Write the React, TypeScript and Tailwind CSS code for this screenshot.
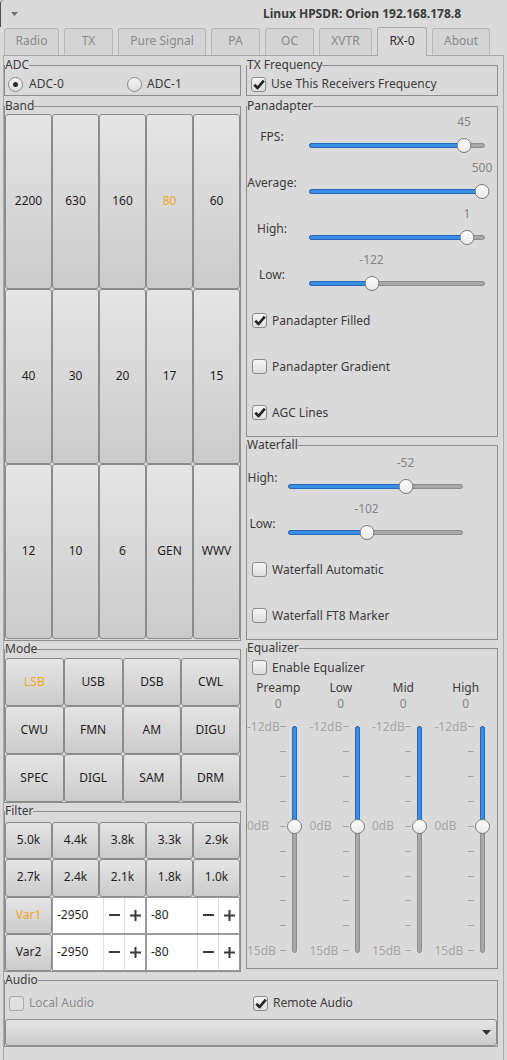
import React from 'react'

const TABS = [
  { label: 'Radio', w: 'w-[55px]' },
  { label: 'TX', w: 'w-[49px]' },
  { label: 'Pure Signal', w: 'w-[88px]' },
  { label: 'PA', w: 'w-[49px]' },
  { label: 'OC', w: 'w-[49px]' },
  { label: 'XVTR', w: 'w-[53px]' },
  { label: 'RX-0', w: 'w-[50px]', active: true },
  { label: 'About', w: 'w-[58px]' },
]

const BANDS = ['2200', '630', '160', '80', '60', '40', '30', '20', '17', '15', '12', '10', '6', 'GEN', 'WWV']
const MODES = ['LSB', 'USB', 'DSB', 'CWL', 'CWU', 'FMN', 'AM', 'DIGU', 'SPEC', 'DIGL', 'SAM', 'DRM']
const FILTERS = ['5.0k', '4.4k', '3.8k', '3.3k', '2.9k', '2.7k', '2.4k', '2.1k', '1.8k', '1.0k']

// knob = px from the left of the scale widget
const PAN_SCALES = [
  { label: 'FPS:', value: '45', knob: 167 },
  { label: 'Average:', value: '500', knob: 185 },
  { label: 'High:', value: '1', knob: 170 },
  { label: 'Low:', value: '-122', knob: 74.5 },
]
const WF_SCALES = [
  { label: 'High:', value: '-52', knob: 127.5 },
  { label: 'Low:', value: '-102', knob: 88.5 },
]
const EQ_BANDS = ['Preamp', 'Low', 'Mid', 'High']

const BTN =
  'flex items-center justify-center pb-px rounded-[3px] border border-[#8b8b8b] bg-linear-to-b from-[#e5e5e5] to-[#cbcbcb] text-[#1f1f1f]'

function Frame({ label, className = '', children }: { label: string; className?: string; children: React.ReactNode }) {
  return (
    <fieldset className={`min-w-0 border border-[#8e8e8e] ${className}`}>
      <legend className="p-0 leading-[16px] text-[#3a3a3a]">{label}</legend>
      {children}
    </fieldset>
  )
}

function Check({ checked = false, disabled = false }: { checked?: boolean; disabled?: boolean }) {
  return (
    <span
      className={`flex h-[15px] w-[15px] shrink-0 items-center justify-center rounded-[3px] border ${
        disabled ? 'border-[#a9a9a9] bg-[#e0e0e0]' : 'border-[#8a8a8a] bg-linear-to-b from-[#f7f7f7] to-[#dcdcdc]'
      }`}
    >
      {checked && (
        <svg width="12" height="11" viewBox="0 0 12 11">
          <path d="M1.3 5.8 L4.6 9 L10.8 1.6" stroke="#262626" strokeWidth="2.7" fill="none" strokeLinejoin="round" />
        </svg>
      )}
    </span>
  )
}

function Radio({ checked = false }: { checked?: boolean }) {
  return (
    <span className="flex h-[15px] w-[15px] shrink-0 items-center justify-center rounded-full border border-[#8a8a8a] bg-linear-to-b from-[#f7f7f7] to-[#dcdcdc]">
      {checked && <span className="h-[5px] w-[5px] rounded-full bg-[#2b2b2b]" />}
    </span>
  )
}

function CheckRow({ label, checked, className = '' }: { label: string; checked?: boolean; className?: string }) {
  return (
    <div className={`flex items-center gap-[5px] pl-[5px] pb-px ${className}`}>
      <Check checked={checked} />
      <span className="text-[#3a3a3a]">{label}</span>
    </div>
  )
}

function HScale({ value, knob, trackLeft, trackWidth, className }: { value: string; knob: number; trackLeft: number; trackWidth: number; className: string }) {
  return (
    <div className={`relative h-[46px] ${className}`}>
      <span className="absolute top-0 -translate-x-1/2 text-[#858585]" style={{ left: knob }}>
        {value}
      </span>
      <div
        className="absolute top-[29px] h-[5px] rounded-full border border-[#8c8c8c] bg-[#a7a7a7]"
        style={{ left: trackLeft, width: trackWidth }}
      />
      <div
        className="absolute top-[29px] h-[5px] rounded-full border border-[#2567b8] bg-[#3a8de4]"
        style={{ left: trackLeft, width: knob - trackLeft }}
      />
      <div
        className="absolute top-[24px] h-[15px] w-[15px] -translate-x-1/2 rounded-full border border-[#7b7b7b] bg-linear-to-b from-white to-[#e9e9e9]"
        style={{ left: knob }}
      />
    </div>
  )
}

function VScale() {
  const marks = Array.from({ length: 10 }, (_, i) => 14 + i * 24.92)
  const labels: Record<number, string> = { 0: '-12dB', 4: '0dB', 9: '15dB' }
  return (
    <div className="relative h-[256px]">
      {marks.map((y, i) => (
        <React.Fragment key={i}>
          {labels[i] && (
            <span className="absolute left-0 -translate-y-1/2 leading-[14px] text-[#a6a6a6]" style={{ top: y + 0.5 }}>
              {labels[i]}
            </span>
          )}
          <span className="absolute left-[33px] h-px w-[6px] bg-[#a6a6a6]" style={{ top: y }} />
        </React.Fragment>
      ))}
      <div className="absolute left-[45px] top-[14px] h-[227px] w-[5px] rounded-full border border-[#8c8c8c] bg-[#a7a7a7]" />
      <div className="absolute left-[45px] top-[14px] h-[102px] w-[5px] rounded-full border border-[#2567b8] bg-[#3a8de4]" />
      <div className="absolute left-[40px] top-[107px] h-[15px] w-[15px] rounded-full border border-[#7b7b7b] bg-linear-to-b from-white to-[#e9e9e9]" />
    </div>
  )
}

function Spin({ value }: { value: string }) {
  return (
    <div className="col-span-2 flex border border-[#9a9a9a] bg-white">
      <span className="flex flex-1 items-center pb-px pl-[4px] text-[#1f1f1f]">{value}</span>
      <span className="flex w-[21px] items-center justify-center border-l border-[#dedede]">
        <svg width="11" height="2" viewBox="0 0 11 2">
          <rect width="11" height="2" fill="#3a3a3a" />
        </svg>
      </span>
      <span className="flex w-[21px] items-center justify-center border-l border-[#dedede]">
        <svg width="11" height="11" viewBox="0 0 11 11">
          <rect y="4.5" width="11" height="2" fill="#3a3a3a" />
          <rect x="4.5" width="2" height="11" fill="#3a3a3a" />
        </svg>
      </span>
    </div>
  )
}

export default function App() {
  return (
    <div className="h-[1060px] w-[507px] overflow-hidden bg-[#dadada] font-['Noto_Sans',sans-serif] text-[12px] leading-[16px] text-[#3a3a3a]">
      {/* Title bar */}
      <div className="flex h-[27px] items-center rounded-tl-[4px] border-l border-[#4e4e4e]">
        <svg className="ml-[10px]" width="7" height="4" viewBox="0 0 7 4">
          <path d="M0 0h7L3.5 4z" fill="#6e6e6e" />
        </svg>
        <span className="flex-1 pr-[46px] text-right font-bold text-[#3a3a3a]">Linux HPSDR: Orion 192.168.178.8</span>
      </div>

      {/* Tabs */}
      <div className="flex h-[28px] items-end gap-[5px] pl-[4px]">
        {TABS.map((t) =>
          t.active ? (
            <div
              key={t.label}
              className={`relative z-10 -mb-px flex h-[29px] items-center justify-center rounded-t-[3px] border border-b-0 border-[#a9a9a9] bg-[#dadada] pb-[3px] text-[#2f2f2f] ${t.w}`}
            >
              {t.label}
            </div>
          ) : (
            <div
              key={t.label}
              className={`flex h-[27px] items-center justify-center rounded-t-[3px] border border-b-0 border-[#b7b7b7] bg-[#d4d4d4] pb-[2px] text-[#8a8a8a] ${t.w}`}
            >
              {t.label}
            </div>
          )
        )}
      </div>

      {/* Notebook page */}
      <div className="ml-[3px] h-[1006px] w-[501px] border-x border-t border-[#a9a9a9]">
        <div className="flex gap-[5px]">
          {/* Left column */}
          <div className="flex w-[237px] flex-col">
            <Frame label="ADC" className="mt-px">
              <div className="flex h-[22px] items-center">
                <div className="flex w-[119px] items-center gap-[6px] pl-[3px]">
                  <Radio checked />
                  <span>ADC-0</span>
                </div>
                <div className="flex items-center gap-[5px] pl-[3px]">
                  <Radio />
                  <span>ADC-1</span>
                </div>
              </div>
            </Frame>

            <Frame label="Band" className="mt-[2px] pb-px">
              <div className="grid h-[525px] grid-cols-5 grid-rows-3">
                {BANDS.map((b) => (
                  <div key={b} className={`${BTN} ${b === '80' ? 'text-[#f5a623]' : ''}`}>
                    {b}
                  </div>
                ))}
              </div>
            </Frame>

            <Frame label="Mode" className="pt-px">
              <div className="grid h-[144px] grid-cols-4 grid-rows-3">
                {MODES.map((m) => (
                  <div key={m} className={`${BTN} ${m === 'LSB' ? 'text-[#f5a623]' : ''}`}>
                    {m}
                  </div>
                ))}
              </div>
            </Frame>

            <Frame label="Filter" className="pt-[3px]">
              <div className="grid h-[149px] grid-cols-5 grid-rows-4">
                {FILTERS.map((f) => (
                  <div key={f} className={BTN}>
                    {f}
                  </div>
                ))}
                <div className={`${BTN} text-[#f5a623]`}>Var1</div>
                <Spin value="-2950" />
                <Spin value="-80" />
                <div className={BTN}>Var2</div>
                <Spin value="-2950" />
                <Spin value="-80" />
              </div>
            </Frame>
          </div>

          {/* Right column */}
          <div className="flex w-[252px] flex-col">
            <Frame label="TX Frequency" className="mt-px">
              <div className="flex h-[22px] items-center gap-[5px] pl-[4px]">
                <Check checked />
                <span>Use This Receivers Frequency</span>
              </div>
            </Frame>

            <Frame label="Panadapter" className="mt-[2px]">
              {PAN_SCALES.map((s) => (
                <div key={s.label} className="flex">
                  <span className="flex h-[46px] w-[50px] items-center justify-center">{s.label}</span>
                  <HScale value={s.value} knob={s.knob} trackLeft={12} trackWidth={176} className="w-[198px]" />
                </div>
              ))}
              <CheckRow label="Panadapter Filled" checked className="h-[46px]" />
              <CheckRow label="Panadapter Gradient" className="h-[46px]" />
              <CheckRow label="AGC Lines" checked className="h-[46px]" />
            </Frame>

            <Frame label="Waterfall" className="pt-[2px]">
              {WF_SCALES.map((s) => (
                <div key={s.label} className="flex">
                  <span className="flex h-[46px] w-[31px] items-center justify-center">{s.label}</span>
                  <HScale value={s.value} knob={s.knob} trackLeft={10} trackWidth={175} className="w-[198px]" />
                </div>
              ))}
              <CheckRow label="Waterfall Automatic" className="h-[46px]" />
              <CheckRow label="Waterfall FT8 Marker" className="h-[46px]" />
            </Frame>

            <Frame label="Equalizer">
              <CheckRow label="Enable Equalizer" className="h-[24px]" />
              <div className="grid grid-cols-4">
                {EQ_BANDS.map((b) => (
                  <div key={b} className="flex flex-col">
                    <span className="h-[16px] text-center text-[#3a3a3a]">{b}</span>
                    <span className="h-[16px] text-center text-[#858585]">0</span>
                    <VScale />
                  </div>
                ))}
              </div>
            </Frame>
          </div>
        </div>

        {/* Audio */}
        <Frame label="Audio" className="mr-[5px]">
          <div className="grid h-[30px] grid-cols-2 items-center pl-[4px]">
            <div className="flex items-center gap-[5px]">
              <Check disabled />
              <span className="text-[#8c8c8c]">Local Audio</span>
            </div>
            <div className="flex items-center gap-[5px]">
              <Check checked />
              <span>Remote Audio</span>
            </div>
          </div>
          <div className={`${BTN} mt-px h-[27px] justify-end pr-[5px]`}>
            <svg width="9" height="5" viewBox="0 0 9 5">
              <path d="M0 0h9L4.5 5z" fill="#333333" />
            </svg>
          </div>
        </Frame>
      </div>
    </div>
  )
}
